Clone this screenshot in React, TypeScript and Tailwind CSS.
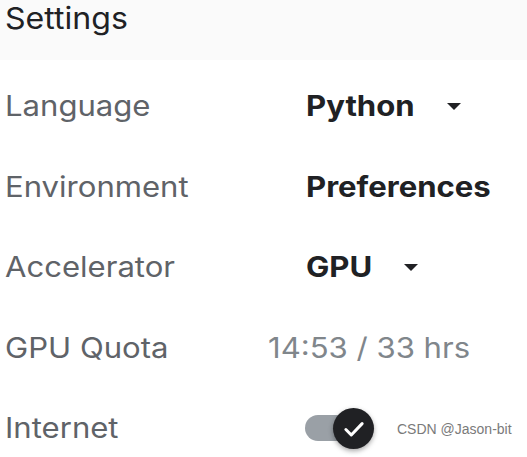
import { ReactNode } from "react";

const wide = "inline-block origin-left scale-x-[1.11] text-[28px]";

function Caret({ gap }: { gap: string }) {
  return (
    <svg width="14" height="7" viewBox="0 0 14 7" className={gap}>
      <path d="M0 0h14L7 7z" fill="#202124" />
    </svg>
  );
}

function Toggle() {
  return (
    <div className="relative h-[44px] w-[72px]">
      <div className="absolute left-0 top-[9px] h-[26px] w-[46px] rounded-full bg-[#9aa0a6]" />
      <div className="absolute left-[28px] top-[2px] flex h-[41px] w-[41px] items-center justify-center rounded-full bg-[#202124] shadow-[0_2px_5px_rgba(0,0,0,0.35)]">
        <svg width="26" height="26" viewBox="0 0 24 24" fill="none">
          <path d="M4.5 12.5l5 5L19.5 7" stroke="#fff" strokeWidth="2.8" strokeLinecap="round" strokeLinejoin="round" />
        </svg>
      </div>
    </div>
  );
}

function Row({ label, children, valueClass = "pl-[306px]" }: { label: string; children: ReactNode; valueClass?: string }) {
  return (
    <div className="relative flex h-[80.5px] items-center">
      <span className={`absolute left-[5px] text-[#5f6368] ${wide}`}>{label}</span>
      <div className={`flex items-center ${valueClass}`}>{children}</div>
    </div>
  );
}

export default function App() {
  return (
    <div className="h-[457px] w-[527px] overflow-hidden bg-white font-['Inter',sans-serif]">
      <div className="h-[60px] bg-[#fafafa] pl-[5px]">
        <span className="inline-block origin-left scale-x-[1.07] text-[30px] leading-[36px] text-[#202124]">Settings</span>
      </div>
      <div className="pt-[6px]">
        <Row label="Language">
          <span className={`w-[109px] font-bold text-[#202124] ${wide}`}>Python</span>
          <Caret gap="ml-[32px]" />
        </Row>
        <Row label="Environment">
          <span className={`font-bold text-[#202124] ${wide}`}>Preferences</span>
        </Row>
        <Row label="Accelerator">
          <span className={`w-[67px] font-bold text-[#202124] ${wide}`}>GPU</span>
          <Caret gap="ml-[31px]" />
        </Row>
        <Row label="GPU Quota" valueClass="pl-[268px]">
          <span className={`text-[#80868b] ${wide}`}>14:53 / 33 hrs</span>
        </Row>
        <div className="relative flex h-[80.5px] items-center">
          <span className={`absolute left-[5px] text-[#5f6368] ${wide}`}>Internet</span>
          <div className="pl-[305px]">
            <Toggle />
          </div>
          <span className="absolute left-[397px] top-[31px] font-['Liberation_Sans',sans-serif] text-[14px] text-[#7a7a7a]">
            CSDN @Jason-bit
          </span>
        </div>
      </div>
    </div>
  );
}
